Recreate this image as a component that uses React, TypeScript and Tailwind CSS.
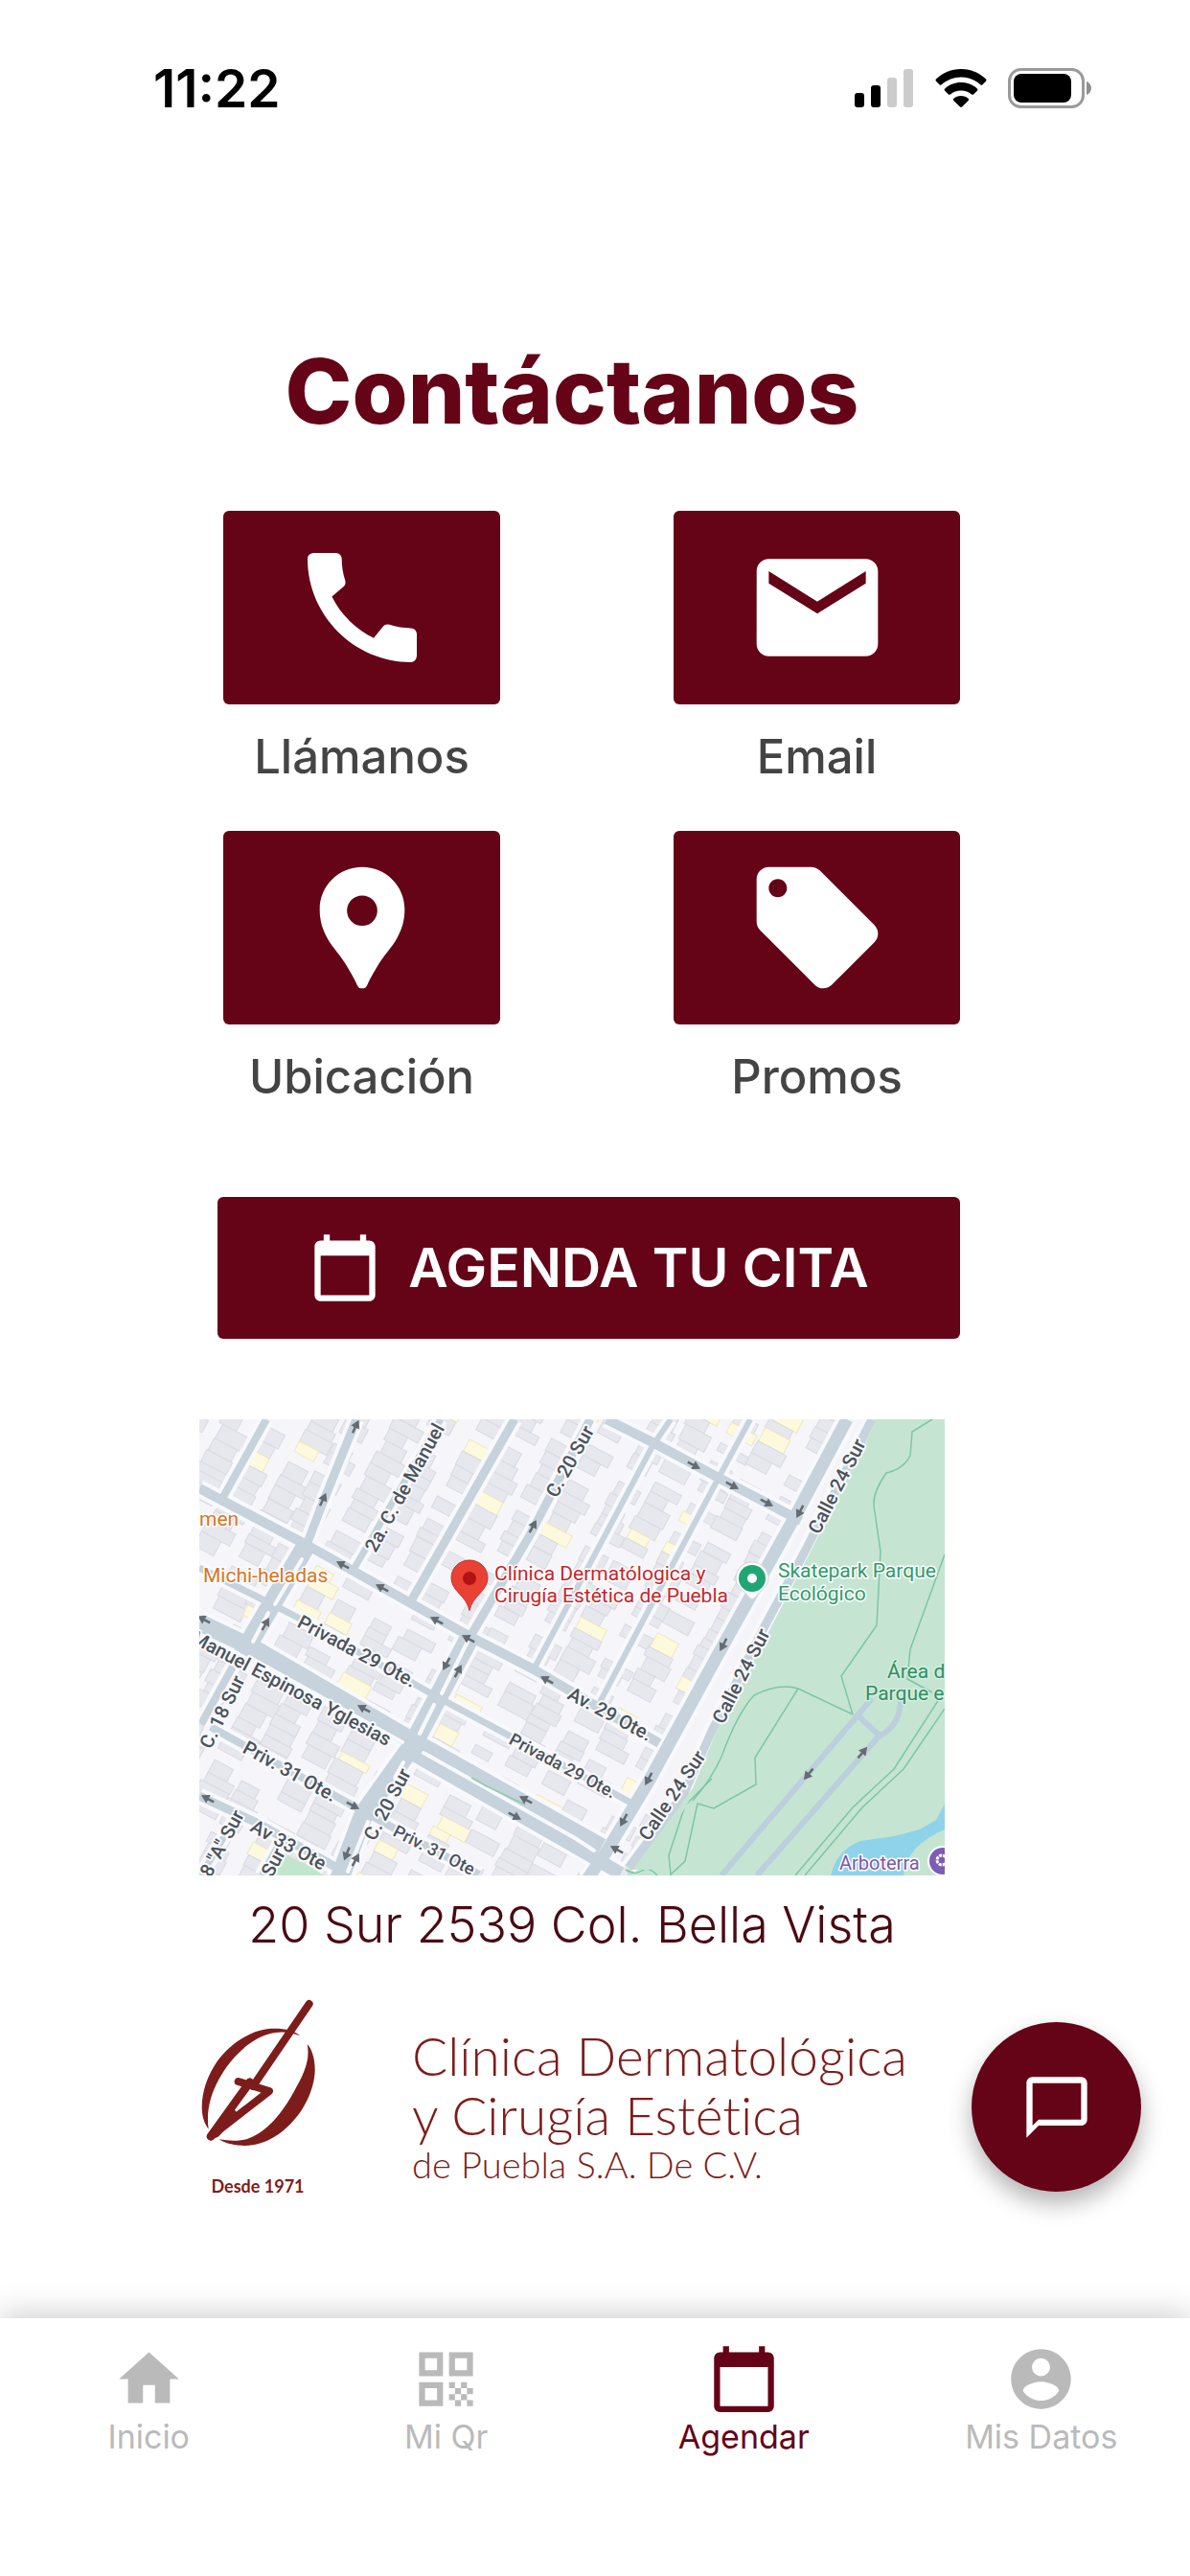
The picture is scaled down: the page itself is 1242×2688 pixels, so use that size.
import React from 'react'
import { MdCall, MdCalendarToday, MdChatBubbleOutline, MdEmail, MdHome, MdLocalOffer, MdQrCode } from 'react-icons/md'

interface IconProps {
  className?: string
}

function PinIcon({ className }: IconProps) {
  return (
    <svg viewBox="0 0 24 24" fill="currentColor" className={className} aria-hidden="true">
      <path
        fillRule="evenodd"
        d="M12 2C8.1 2 5 5.1 5 9c0 1.9.5 3.4 1.3 4.8.9 1.6 2.2 2.8 3.1 4.4.7 1.2 1.2 2 1.7 3.1.2.500.4.7.9.7s.7-.2.9-.7c.5-1.100 1-1.900 1.700-3.100.9-1.600 2.200-2.800 3.100-4.400C18.500 12.400 19 10.900 19 9c0-3.900-3.100-7-7-7zm0 9.700a2.500 2.500 0 1 1 0-5 2.500 2.500 0 0 1 0 5z"
      />
    </svg>
  )
}

function AccountIcon({ className }: IconProps) {
  return (
    <svg viewBox="0 0 24 24" fill="currentColor" className={className} aria-hidden="true">
      <path d="M12 2C6.48 2 2 6.48 2 12s4.48 10 10 10 10-4.48 10-10S17.52 2 12 2zm0 3c1.66 0 3 1.34 3 3s-1.34 3-3 3-3-1.34-3-3 1.34-3 3-3zm0 14.2c-2.5 0-4.71-1.28-6-3.22.03-1.99 4-3.08 6-3.08 1.99 0 5.97 1.09 6 3.08-1.29 1.94-3.5 3.22-6 3.22z" />
    </svg>
  )
}

function StatusBar() {
  return (
    <header className="flex items-center justify-between pl-[160px] pr-[102px] pt-[60px] text-black">
      <time className="text-[55px] leading-[64px] font-semibold">11:22</time>
      <div className="flex items-center gap-[22px]">
        <svg viewBox="0 0 62 40" className="h-10 w-[62px]" aria-label="Señal">
          <rect x="0" y="25" width="10" height="15" rx="3" />
          <rect x="17" y="17" width="10" height="23" rx="3" />
          <rect x="34" y="9" width="10" height="31" rx="3" fill="#cccccc" />
          <rect x="51" y="0" width="10" height="40" rx="3" fill="#cccccc" />
        </svg>
        <svg viewBox="0 0 54 40" className="h-10 w-[54px]" aria-label="Wi-Fi">
          <path d="M27 0C37 0 46 4 53 10.5c.7.7.7 1.5 0 2.2l-3.5 3.5c-.7.7-1.5.7-2.200 0C41.500 11.500 34.500 8.500 27 8.500S12.500 11.500 6.700 16.200c-.7.7-1.500.7-2.200 0L1 12.700c-.7-.7-.7-1.500 0-2.200C8 4 17 0 27 0z" />
          <path d="M27 14c6.500 0 12.300 2.400 16.800 6.400.8.700.8 1.600.1 2.300l-3.600 3.600c-.7.700-1.500.7-2.200.1-3-2.500-6.900-3.900-11.100-3.900s-8.100 1.400-11.100 3.900c-.7.600-1.500.6-2.200-.1l-3.600-3.600c-.7-.7-.7-1.600.1-2.300C14.700 16.400 20.500 14 27 14z" />
          <path d="M27 28c2.900 0 5.500 1 7.500 2.700.8.700.8 1.500.1 2.200l-6.300 6.300c-.8.800-1.800.8-2.600 0l-6.300-6.300c-.7-.7-.7-1.500.1-2.200C21.500 29 24.100 28 27 28z" />
        </svg>
        <svg viewBox="0 0 88 42" className="h-[42px] w-[88px]" aria-label="Batería">
          <rect x="1.5" y="1.5" width="77" height="39" rx="12" fill="none" stroke="#9a9a9a" strokeWidth="3" />
          <rect x="6" y="6" width="60" height="30" rx="8" />
          <path d="M82 14c3 1 5 4 5 7s-2 6-5 7z" fill="#8f8f8f" />
        </svg>
      </div>
    </header>
  )
}

interface ActionCardProps {
  label: string
  children: React.ReactNode
}

function ActionCard({ label, children }: ActionCardProps) {
  return (
    <button type="button" className="flex flex-col items-center gap-[25px] text-[#444444]">
      <span className="flex h-[202px] w-full items-center justify-center rounded-md bg-[#650317] text-white">
        {children}
      </span>
      <span className="text-[49px] leading-[60px] font-medium">{label}</span>
    </button>
  )
}

// Street grid of the map is turned 28 degrees; lots are laid out in that frame
const COLUMNS = [-60, -24, 20, 56, 100, 132, 178, 212, 256, 290, 334, 368, 414, 448, 490, 524, 570, 604, 648, 684, 728]

function lots() {
  const out: { x: number; y: number; w: number; h: number; yellow: boolean }[] = []
  let seed = 7
  const rnd = () => {
    seed = (seed * 16807) % 2147483647
    return seed / 2147483647
  }
  COLUMNS.forEach(col => {
    let y = -420
    while (y < 480) {
      const h = 9 + Math.round(rnd() * 8)
      const gap = rnd() > 0.9 ? 12 : 0
      if (rnd() > 0.14) {
        const w = 20 + Math.round(rnd() * 14)
        out.push({ x: col + Math.round(rnd() * 5), y, w, h, yellow: rnd() > 0.9 })
      }
      y += h + gap
    }
  })
  return out
}

const LOTS = lots()

const STREETS = [
  { d: 'M70 0L25 81', w: 8 },
  { d: 'M164 0L127 92L112 131', w: 9 },
  { d: 'M35 258L2 318', w: 8 },
  { d: 'M252 0L162 155', w: 7 },
  { d: 'M329 0L222 188', w: 9 },
  { d: 'M408 0L345 121L282 228', w: 9 },
  { d: 'M492 0L473 28L349 261', w: 6 },
  { d: 'M575 0L542 61L415 301', w: 6 },
  { d: 'M676 0L622 101L540 248L469 378L425 451L405 480', w: 13 },
  { d: 'M702 0L632 138L589 218L535 325L506 390L448 468', w: 9 },
  { d: 'M0 72L112 131L285 228L349 261L480 338', w: 10 },
  { d: 'M0 155L72 191L105 208L245 288L325 331L452 401', w: 7 },
  { d: 'M425 0L475 25L542 61L628 106', w: 10 },
  { d: 'M12 321L169 408L292 475', w: 8 },
  { d: 'M0 393L60 421L149 471', w: 9 },
  { d: 'M42 408L2 476', w: 7 },
  { d: 'M85 440L65 476', w: 7 },
]

const AVENUES = [
  { d: 'M112 131L45 245', w: 20 },
  { d: 'M282 228L222 341L172 411L146 480', w: 20 },
  { d: 'M0 212L59 240L222 335L420 446', w: 18 },
  { d: 'M215 345L392 446L440 474', w: 14 },
]

const MEDIANS = [
  'M107 146L79 193',
  'M72 202L56 232',
  'M280 232L253 286',
  'M245 298L230 328',
  'M213 358L204 374',
  'M176 420L155 472',
  'M52 248L212 337',
  'M234 348L392 437L412 450',
]

const ARROWS = [
  [163, 8, -65], [129, 84, -65], [69, 214, -60], [150, 152, 208], [191, 176, 208], [248, 210, 208],
  [281, 229, 208], [348, 112, -62], [516, 48, 28], [556, 69, 28], [592, 87, 28], [627, 96, 118],
  [547, 235, 118], [5, 209, 208], [172, 302, 208], [258, 255, 118], [270, 263, -62], [363, 272, 208],
  [9, 396, 208], [160, 403, 28], [154, 453, 112], [163, 460, -62], [341, 397, 208], [329, 414, 28],
  [469, 375, 118], [443, 418, 118], [436, 449, 208], [636, 370, 130], [692, 348, -50],
]

const STREET_NAMES = [
  { text: '2a. C. de Manuel', x: 184, y: 140, r: -61, s: 20 },
  { text: 'C. 20 Sur', x: 373, y: 83, r: -61, s: 20 },
  { text: 'Calle 24 Sur', x: 647, y: 121, r: -63, s: 20 },
  { text: 'Calle 24 Sur', x: 547, y: 319, r: -63, s: 20 },
  { text: 'Calle 24 Sur', x: 469, y: 441, r: -56, s: 20 },
  { text: 'Privada 29 Ote.', x: 101, y: 216, r: 28, s: 20 },
  { text: 'Av. 29 Ote.', x: 383, y: 291, r: 28, s: 20 },
  { text: 'Privada 29 Ote.', x: 322, y: 338, r: 28, s: 18 },
  { text: 'Manuel Espinosa Yglesias', x: -10, y: 232, r: 28, s: 20 },
  { text: 'C. 18 Sur', x: 12, y: 345, r: -64, s: 20 },
  { text: 'Priv. 31 Ote.', x: 44, y: 347, r: 29, s: 20 },
  { text: 'Av 33 Ote', x: 52, y: 429, r: 29, s: 20 },
  { text: 'C. 20 Sur', x: 183, y: 441, r: -62, s: 20 },
  { text: 'Priv. 31 Ote', x: 201, y: 434, r: 27, s: 18 },
  { text: '8 "A" Sur', x: 12, y: 479, r: -62, s: 20 },
  { text: 'Sur', x: 76, y: 479, r: -62, s: 20 },
]

function LocationMap() {
  return (
    <svg
      viewBox="0 0 778 476"
      className="block w-full font-[Roboto,sans-serif]"
      role="img"
      aria-label="Mapa de la clínica"
    >
      <rect width="778" height="476" fill="#f6f5f9" />
      <g transform="rotate(28)" strokeWidth="1">
        {LOTS.map((lot, i) => (
          <rect
            key={i}
            x={lot.x}
            y={lot.y}
            width={lot.w}
            height={lot.h}
            fill={lot.yellow ? '#fdf9dc' : '#e7e7ee'}
            stroke={lot.yellow ? '#efe8c0' : '#d9dae3'}
          />
        ))}
      </g>

      <path d="M475 476L469 396L622 108L676 0H704L634 140L537 325L512 385L447 476z" fill="#f5f5f9" />
      <path d="M704 0L634 140L537 325L512 385L447 470V476H778V0z" fill="#c5e5d2" />
      <path d="M87 453L115 466L130 476H79z" fill="#c2e6cd" />
      <path d="M778 401L769 418L752 428L725 435L690 440Q665 450 659 476H735Q738 445 778 428z" fill="#8fd3ea" />

      <g fill="none" stroke="#7dc6a5" strokeWidth="1.5">
        <path d="M765 0L744 13L742 38Q735 52 717 56Q703 76 704 90L711 138L707 215L670 268L682 308" />
        <path d="M778 141L742 240L739 271L765 285" />
        <path d="M515 398Q535 375 545 352Q562 306 579 288Q605 275 625 281L682 308" />
        <path d="M625 281L580 353L581 381L537 406L520 401L507 461L492 475L490 455L507 403L535 375" />
        <path d="M772 292L725 365L682 405L622 476" />
        <path d="M778 302L735 365L692 405L632 476" />
        <path d="M445 470Q455 476 462 471T478 476" />
      </g>
      <g fill="none" stroke="#bccfdd" strokeWidth="6">
        <path d="M702 291L682 315L545 476" />
        <path d="M732 292Q732 320 709 331L582 476" />
        <path d="M685 307L711 331" />
      </g>

      <g fill="none" stroke="#f8f9fc" strokeLinejoin="round">
        {STREETS.map(s => (
          <path key={s.d} d={s.d} strokeWidth={s.w + 8} />
        ))}
        {AVENUES.map(s => (
          <path key={s.d} d={s.d} strokeWidth={s.w + 8} />
        ))}
      </g>
      <path d="M707 0L637 140L540 325L515 385L450 470H470L550 330L650 138L722 0z" fill="#c5e5d2" />
      <g fill="none" stroke="#c6d3dc" strokeLinejoin="round">
        {STREETS.map(s => (
          <path key={s.d} d={s.d} strokeWidth={s.w} />
        ))}
        {AVENUES.map(s => (
          <path key={s.d} d={s.d} strokeWidth={s.w} />
        ))}
      </g>
      <g fill="none" stroke="#f8f9fc" strokeWidth="4" strokeLinecap="round">
        {MEDIANS.map(d => (
          <path key={d} d={d} />
        ))}
      </g>
      <path d="M284 374L300 383L340 402" fill="none" stroke="#8fcba4" strokeWidth="1.5" />

      <g fill="#656b73" stroke="#656b73">
        {ARROWS.map(([x, y, r], i) => (
          <g key={i} transform={`translate(${x} ${y}) rotate(${r})`}>
            <path d="M-7 0H1" strokeWidth="2.5" />
            <path d="M0 -4L7 0L0 4z" strokeWidth="1" />
          </g>
        ))}
      </g>

      <g fill="#4b525b" stroke="#f8f9fb" strokeWidth="4" strokeLinejoin="round" paintOrder="stroke" fontWeight="500">
        {STREET_NAMES.map((n, i) => (
          <text key={i} transform={`translate(${n.x} ${n.y}) rotate(${n.r})`} fontSize={n.s}>
            {n.text}
          </text>
        ))}
      </g>

      <g fontSize="21" stroke="#ffffff" strokeWidth="3" strokeLinejoin="round" paintOrder="stroke">
        <g fill="#d9731f">
          <text x="0" y="111">men</text>
          <text x="4" y="170">Michi-heladas</text>
        </g>
        <g fill="#c4262b">
          <text x="308" y="168">Clínica Dermatólogica y</text>
          <text x="308" y="191">Cirugía Estética de Puebla</text>
        </g>
        <g fill="#2f9a6c">
          <text x="604" y="165">Skatepark Parque</text>
          <text x="604" y="189">Ecológico</text>
        </g>
        <g fill="#2f8f63" stroke="#d5eddf">
          <text x="718" y="270">Área de</text>
          <text x="695" y="293">Parque ec</text>
        </g>
        <text x="668" y="470" fontSize="20" fill="#7a58ad">Arboterra</text>
      </g>

      <path d="M282 147c-10.5 0-19 8-19 18.5 0 14 16 18.5 19 34 3-15.5 19-20 19-34 0-10.5-8.5-18.5-19-18.5z" fill="#e94235" stroke="#c5302a" strokeWidth="1" />
      <circle cx="282" cy="166" r="7" fill="#b11313" />
      <path d="M577 149a17 17 0 0 0-17 17c0 9 8 12 14 20q3 3 6 0c6-8 14-11 14-20a17 17 0 0 0-17-17z" fill="#ffffff" stroke="#d0d4d8" strokeWidth="1" />
      <circle cx="577" cy="166" r="14" fill="#1fa673" />
      <circle cx="577" cy="166" r="5" fill="#ffffff" />
      <circle cx="776" cy="461" r="16" fill="#ffffff" />
      <circle cx="776" cy="461" r="14" fill="#7c5cb5" />
      <circle cx="775" cy="460" r="5" fill="none" stroke="#ffffff" strokeWidth="3" strokeDasharray="3 1" />
    </svg>
  )
}

function BoltLogo() {
  return (
    <svg viewBox="24 36 366 474" className="h-[158px] w-[122px]" fill="#7d1d1b" aria-hidden="true">
      <path d="M340 160C318 142 280 134 235 139C180 146 120 186 80 240C45 290 28 350 33 400C36 425 44 440 53 452C46 400 56 350 86 295C126 222 195 158 262 150C290 146 315 150 340 160z" />
      <path d="M362 186C376 200 387 232 386 270C384 330 350 400 300 445C265 480 215 504 168 504C136 504 108 498 86 484C120 490 150 490 176 482C235 462 285 400 320 335C352 280 372 235 362 186z" />
      <g fill="none" stroke="#7d1d1b" strokeLinecap="round" strokeLinejoin="round">
        <path d="M368 60L192 318" strokeWidth="24" />
        <path d="M182 305L60 475" strokeWidth="26" />
        <path d="M146 303L243 333L60 475" strokeWidth="24" />
        <path d="M128 405L75 465" strokeWidth="28" />
      </g>
    </svg>
  )
}

const NAV_ITEMS = [
  { label: 'Inicio', icon: MdHome },
  { label: 'Mi Qr', icon: MdQrCode },
  { label: 'Agendar', icon: MdCalendarToday },
  { label: 'Mis Datos', icon: AccountIcon },
]

export default function App() {
  return (
    <div className="relative flex min-h-screen flex-col bg-white font-[Inter,'Liberation_Sans',sans-serif]">
      <StatusBar />

      <main className="flex-1 pl-[208px] pr-[240px]">
        <div className="pr-4">
          <h1 className="pt-[224px] text-center text-[94px] leading-[120px] font-extrabold text-[#650317]">Contáctanos</h1>
        </div>

        <div className="mt-[65px] grid grid-cols-[289fr_299fr] gap-x-[181px] gap-y-[47px] pl-[25px]">
          <ActionCard label="Llámanos">
            <MdCall className="size-[152px]" />
          </ActionCard>
          <ActionCard label="Email">
            <MdEmail className="size-[152px]" />
          </ActionCard>
          <ActionCard label="Ubicación">
            <PinIcon className="size-[152px]" />
          </ActionCard>
          <ActionCard label="Promos">
            <MdLocalOffer className="size-[152px]" />
          </ActionCard>
        </div>

        <div className="pl-[19px] pt-[95px]">
          <button
            type="button"
            className="flex h-[148px] w-full items-center justify-center gap-7 rounded-md bg-[#650317] text-[57px] font-semibold text-white"
          >
            <MdCalendarToday className="size-[76px]" />
            AGENDA TU CITA
          </button>
        </div>

        <section className="pr-4 pt-[84px]">
          <LocationMap />
          <p className="pt-[20px] text-center text-[52px] leading-[64px] font-light text-[#4a0a14]">
            20 Sur 2539 Col. Bella Vista
          </p>
          <div className="flex gap-[100px] pt-[42px] text-[#7d1d1b]">
            <div className="flex w-[122px] flex-col items-center gap-7">
              <BoltLogo />
              <span className="text-[18px] leading-[24px] font-bold whitespace-nowrap font-[Lato,sans-serif]">Desde 1971</span>
            </div>
            <div className="pt-[31px] font-light whitespace-nowrap font-[Lato,sans-serif] [font-variant-ligatures:none]">
              <p className="text-[55px] leading-[62px]">Clínica Dermatológica</p>
              <p className="text-[55px] leading-[62px]">y Cirugía Estética</p>
              <p className="text-[38px] leading-[40px]">de Puebla S.A. De C.V.</p>
            </div>
          </div>
        </section>
      </main>

      <button
        type="button"
        aria-label="Chat"
        className="absolute right-[51px] bottom-[401px] flex size-[177px] items-center justify-center rounded-full bg-[#650317] text-white shadow-[0_12px_24px_rgba(0,0,0,0.3)]"
      >
        <MdChatBubbleOutline className="size-[76px]" />
      </button>

      <nav className="grid h-[269px] grid-cols-4 items-start bg-white pt-[26px] shadow-[0_-4px_32px_rgba(0,0,0,0.2)]">
        {NAV_ITEMS.map(item => {
          const active = item.label === 'Agendar'
          const Icon = item.icon
          return (
            <a
              key={item.label}
              href="#"
              aria-current={active ? 'page' : undefined}
              className={`flex flex-col items-center gap-1 text-[34px] leading-[38px] ${active ? 'text-[#650317]' : 'text-[#bababa]'}`}
            >
              <Icon className="size-[75px]" />
              {item.label}
            </a>
          )
        })}
      </nav>
    </div>
  )
}
